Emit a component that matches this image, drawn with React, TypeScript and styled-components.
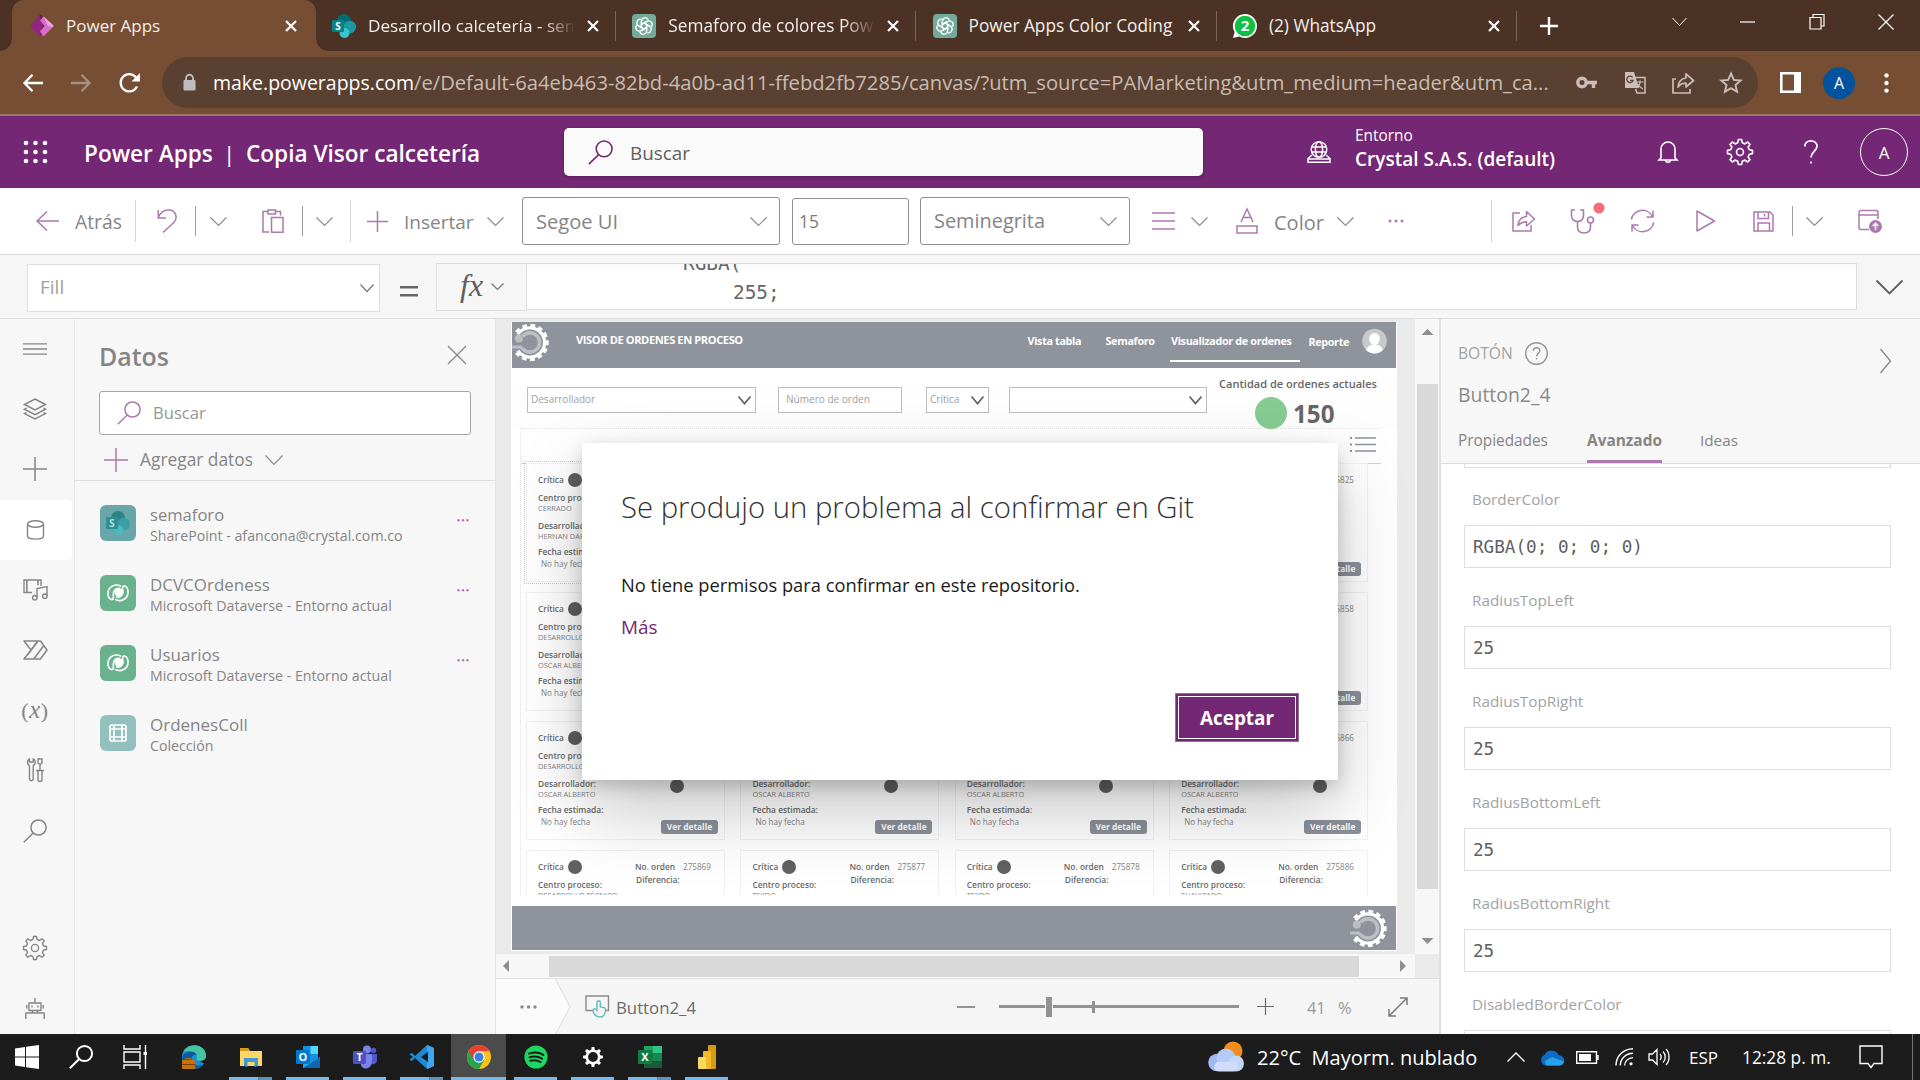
import React from "react";
import styled, { createGlobalStyle, css } from "styled-components";

const SANS = `"Open Sans", "Noto Sans", sans-serif`;
const MONO = `"DejaVu Sans Mono", "Liberation Mono", monospace`;
const plum = "#ac7aad";
const ink = "#858585";

const Global = createGlobalStyle`
  *, *::before, *::after { box-sizing: border-box; }
  html, body { margin: 0; padding: 0; overflow: hidden; background: #fff; }
  body { font-family: ${SANS}; font-size: 17px; color: ${ink}; }
`;

/* ---------- shared primitives ---------- */

const Screen = styled.div`
  width: 1920px;
  height: 1080px;
  overflow: hidden;
  display: flex;
  flex-direction: column;
  position: relative;
`;

const row = css`
  display: flex;
  align-items: center;
  & > * { flex-shrink: 0; }
`;

type TextProps = { $size?: number; $weight?: number; $color?: string; $ml?: number; $w?: number };
const Text = styled.span<TextProps>`
  display: block;
  white-space: pre;
  line-height: 1.35;
  font-size: ${(p) => p.$size ?? 17}px;
  font-weight: ${(p) => p.$weight ?? 400};
  color: ${(p) => p.$color ?? "inherit"};
  margin-left: ${(p) => p.$ml ?? 0}px;
  width: ${(p) => (p.$w ? `${p.$w}px` : "auto")};
`;

const Svg = styled.svg<{ $ml?: number }>`
  display: block;
  flex-shrink: 0;
  margin-left: ${(p) => p.$ml ?? 0}px;
  overflow: visible;
`;

type IconProps = {
  w: number; h: number; ml?: number; c?: string; sw?: number; vb?: string; children: React.ReactNode;
};
const Icon = ({ w, h, ml, c = "currentColor", sw = 1.4, vb, children }: IconProps) => (
  <Svg width={w} height={h} viewBox={vb ?? `0 0 ${w} ${h}`} $ml={ml} fill="none" stroke={c} strokeWidth={sw}>
    {children}
  </Svg>
);

const Chevron = ({ ml, w = 17, h = 9, c = "#8c8c8c", sw = 1.2 }: { ml?: number; w?: number; h?: number; c?: string; sw?: number }) => (
  <Icon w={w} h={h} ml={ml} c={c} sw={sw}><path d={`M.5 .5 L${w / 2} ${h - 0.5} L${w - 0.5} .5`} /></Icon>
);
const Magnifier = ({ s, ml, c, sw = 1.5 }: { s: number; ml?: number; c: string; sw?: number }) => (
  <Icon w={s} h={s} ml={ml} c={c} sw={sw} vb="0 0 24 24">
    <circle cx="15.5" cy="8.5" r="7.6" /><path d="M10.2 14 L.8 23.2" />
  </Icon>
);
const gearPath = (n: number, ro: number, ri: number, c: number) => {
  const pts: string[] = [];
  for (let i = 0; i < n; i++) {
    const a = (i / n) * Math.PI * 2 - Math.PI / 2;
    const s = (Math.PI * 2) / n;
    [[-0.3, ri], [-0.17, ro], [0.17, ro], [0.3, ri]].forEach(([k, r]) =>
      pts.push(`${(c + Math.cos(a + k * s) * r).toFixed(2)} ${(c + Math.sin(a + k * s) * r).toFixed(2)}`));
  }
  return `M${pts.join("L")}Z`;
};
const Gear = ({ s, ml, c, sw = 1.4, hole = 3.6 }: { s: number; ml?: number; c: string; sw?: number; hole?: number }) => (
  <Icon w={s} h={s} ml={ml} c={c} sw={sw} vb="0 0 24 24">
    <path d={gearPath(8, 11.6, 8.8, 12)} strokeLinejoin="round" /><circle cx="12" cy="12" r={hole} />
  </Icon>
);

/* ---------- browser chrome ---------- */

const TabStrip = styled.div`
  ${row}
  height: 51px;
  background: #4b3225;
  color: #fff;
  padding-left: 12px;
`;
const Tab = styled.div<{ $active?: boolean }>`
  ${row}
  position: relative;
  width: ${(p) => (p.$active ? 304 : 300.3)}px;
  height: 51px;
  padding-left: ${(p) => (p.$active ? 18 : 16)}px;
  background: ${(p) => (p.$active ? "#754e34" : "transparent")};
  border-radius: 12px 12px 0 0;
  ${(p) => p.$active && css`
    &::before, &::after {
      content: ""; position: absolute; bottom: 0; width: 12px; height: 12px;
    }
    &::before { left: -12px; background: radial-gradient(circle at 0 0, transparent 11.5px, #754e34 12px); }
    &::after { right: -12px; background: radial-gradient(circle at 100% 0, transparent 11.5px, #754e34 12px); }
  `}
`;
const TabTitle = styled(Text)<{ $fade?: boolean }>`
  margin-left: 12px;
  width: 205px;
  margin-right: 14px;
  overflow: hidden;
  padding-top: 1px;
  color: #f3eeea;
  ${(p) => p.$fade && css`mask-image: linear-gradient(90deg, #000 175px, transparent 208px);`}
`;
const TabRule = styled.i`
  width: 1px;
  height: 30px;
  margin-left: 16px;
  background: #7b6556;
`;
const Close = () => <Icon w={12} h={12} c="#fff" sw={2.2}><path d="M1 1L11 11M11 1L1 11" /></Icon>;

const AddressRow = styled.div`
  ${row}
  height: 65px;
  background: #754e34;
  border-bottom: 2px solid #957a60;
  padding: 0 0 0 23px;
`;
const Omnibox = styled.div`
  ${row}
  width: 1596px;
  height: 51px;
  margin-left: 22px;
  padding-left: 21px;
  border-radius: 26px;
  background: #594030;
  & > span { padding-top: 1px; }
`;
const ProfileDot = styled.div`
  width: 32px;
  height: 32px;
  margin-left: 22px;
  border-radius: 50%;
  background: #00539c;
  color: #fff;
  font-size: 16px;
  line-height: 32px;
  text-align: center;
`;

const GptLogo = () => (
  <Svg width="24" height="24" viewBox="0 0 24 24" fill="none" stroke="#fff" strokeWidth="1.3">
    <rect width="24" height="24" rx="4" fill="#74aa9c" stroke="none" />
    {[0, 60, 120, 180, 240, 300].map((a) => (
      <path key={a} transform={`rotate(${a} 12 12)`} d="M9.4 13.4V7.2A3.6 3.6 0 0 1 16.3 5.9M9.4 10.4L14.6 7.4" />
    ))}
  </Svg>
);
const PowerAppsLogo = () => (
  <Svg width="24" height="24" viewBox="0 0 24 24">
    <path d="M9.5 1 L16 12 L9.5 23 L1 13 Q.3 12 1 11Z" fill="#93277f" />
    <path d="M9.5 1 Q11 0 12 1.5 L16 12 L9.5 23 L12.5 12Z" fill="#6d1a62" />
    <path d="M13.5 2.5 L23 11 Q23.8 12 23 13 L13.5 22.5 L10 17.5 L14.5 12 L10 6.5Z" fill="#d76fc4" />
    <path d="M13.5 2.5 L23 11 Q23.8 12 23 13 L18 12Z" fill="#f0a3e0" />
  </Svg>
);
const SharePointLogo = ({ size = 24 }: { size?: number }) => (
  <Svg width={size} height={size} viewBox="0 0 24 24">
    <circle cx="12" cy="7" r="7" fill="#036c70" />
    <circle cx="17.7" cy="13" r="6.3" fill="#1a9ba1" />
    <circle cx="12.5" cy="19" r="5" fill="#37c6d0" />
    <rect x="0" y="6" width="12" height="12" rx="1" fill="#038387" />
    <text x="6" y="15.6" textAnchor="middle" fontSize="10" fontWeight="700" fill="#fff" fontFamily="Open Sans">S</text>
  </Svg>
);
const WhatsAppLogo = () => (
  <Svg width="24" height="24" viewBox="0 0 24 24">
    <path d="M12 0a12 12 0 1 1-5.8 22.5L0 24l1.6-6A12 12 0 0 1 12 0Z" fill="#fff" />
    <circle cx="12" cy="12" r="10.3" fill="#0cc143" />
    <text x="12" y="17.3" textAnchor="middle" fontSize="15" fontWeight="700" fill="#fff" fontFamily="Open Sans">2</text>
  </Svg>
);

const Browser = () => (
  <>
    <TabStrip>
      <Tab $active><PowerAppsLogo /><TabTitle $size={17}>Power Apps</TabTitle><Close /></Tab>
      <Tab><SharePointLogo /><TabTitle $size={17.2} $fade>Desarrollo calcetería - sem</TabTitle><Close /><TabRule /></Tab>
      <Tab><GptLogo /><TabTitle $size={17.3} $fade>Semaforo de colores Pow</TabTitle><Close /><TabRule /></Tab>
      <Tab><GptLogo /><TabTitle $size={17.25}>Power Apps Color Coding</TabTitle><Close /><TabRule /></Tab>
      <Tab><WhatsAppLogo /><TabTitle $size={17.3}>(2) WhatsApp</TabTitle><Close /><TabRule /></Tab>
      <Icon w={18} h={18} ml={23} c="#fff" sw={2.4}><path d="M9 0V18M0 9H18" /></Icon>
      <Icon w={15} h={45} ml={114} c="#fff" sw={1}><path d="M.5 15L7.5 22.5L14.5 15" /></Icon>
      <Icon w={15} h={45} ml={53} c="#fff" sw={1.2}><path d="M0 19H15" /></Icon>
      <Icon w={16} h={45} ml={54} c="#fff" sw={1.2}><path d="M1 14.5H12V26H1ZM4 14.5V11.5H15V23H12" /></Icon>
      <Icon w={16} h={45} ml={53} c="#fff" sw={1.2}><path d="M.5 11.5L15.5 26.5M15.5 11.5L.5 26.5" /></Icon>
    </TabStrip>
    <AddressRow>
      <Icon w={20} h={18} c="#fff" sw={2.3}><path d="M20 9H1.5M9.5 .8L1.5 9L9.5 17.2" /></Icon>
      <Icon w={20} h={18} ml={28} c="#a98f7e" sw={2.3}><path d="M0 9H18.5M10.5 .8L18.5 9L10.5 17.2" /></Icon>
      <Icon w={21} h={20} ml={28} c="#fff" sw={2.3}><path d="M18 13.5A8.6 8.6 0 1 1 16.8 4.2L19 6.5" /><path d="M21 0V8.6H12.4Z" fill="#fff" stroke="none" /></Icon>
      <Omnibox>
        <Icon w={13} h={17} c="#bdbdc1" sw={1.9}><rect x=".5" y="6" width="12" height="10.5" rx="1" fill="#bdbdc1" stroke="none" /><path d="M3 7V4.3A3.5 3.5 0 0 1 10 4.3V7" /></Icon>
        <Text $size={19.49} $color="#fff" $ml={17} $w={201}>make.powerapps.com</Text>
        <Text $size={20.19} $color="#c8bcb2" $w={1135}>/e/Default-6a4eb463-82bd-4a0b-ad11-ffebd2fb7285/canvas/?utm_source=PAMarketing&amp;utm_medium=header&amp;utm_ca...</Text>
        <Icon w={21} h={13} ml={27} c="#c9bfb8" sw={3.4}><circle cx="6" cy="6.5" r="4.2" /><path d="M10 6.5H21M17.5 7V12" /></Icon>
        <Icon w={22} h={22} ml={27} c="#c9bfb8" sw={1.5}>
          <path d="M1 0H10L15 16H1Z" fill="#c9bfb8" stroke="none" /><path d="M11 5.5H21V21H13L11.5 17" />
          <path d="M12.5 10H19.5M16 8.5V10C16 13 14 15.5 12.5 16M13.5 12C15 14.5 17 16 19 17" strokeWidth="1.2" />
          <path d="M8.6 5.4A3.2 3.2 0 1 0 9 8.4H6.2" stroke="#594030" strokeWidth="1.3" />
        </Icon>
        <Icon w={23} h={22} ml={26} c="#c9bfb8" sw={1.7}><path d="M4 7H1V21H18V17" /><path d="M6 15C6.5 9.5 9.5 6.5 14 6V1.8L21.5 8.5L14 15V11.2C10.5 11.2 8 12.4 6 15Z" strokeLinejoin="round" /></Icon>
        <Icon w={22} h={21} ml={25} c="#c9bfb8" sw={1.9}><path d="M11 1.5L13.8 7.9L20.7 8.5L15.5 13.1L17.1 19.8L11 16.2L4.9 19.8L6.5 13.1L1.3 8.5L8.2 7.9Z" /></Icon>
      </Omnibox>
      <Icon w={21} h={21} ml={22} c="#fff" sw={2.6}><path d="M1.3 1.3H19.7V19.7H1.3Z" /><path d="M14 1H20V20H14Z" fill="#fff" stroke="none" /></Icon>
      <ProfileDot>A</ProfileDot>
      <Icon w={5} h={20} ml={29} c="none"><g fill="#fff"><circle cx="2.5" cy="2.4" r="2.2" /><circle cx="2.5" cy="10" r="2.2" /><circle cx="2.5" cy="17.6" r="2.2" /></g></Icon>
    </AddressRow>
  </>
);

/* ---------- Power Apps header ---------- */

const SuiteHeader = styled.header`
  ${row}
  height: 72px;
  padding-left: 23px;
  background: #742774;
  color: #fff;
  & > span { padding-top: 4px; }
`;
const SuiteSearch = styled.div`
  ${row}
  width: 639px;
  height: 48px;
  margin-left: 84px;
  padding-left: 24px;
  border-radius: 5px;
  background: #fafafa;
  box-shadow: 0 1px 3px rgba(0, 0, 0, 0.3);
  & > span { padding-top: 3px; }
`;
const Environment = styled.div`
  width: 200px;
  margin: -6px 0 0 24px;
`;
const Persona = styled.div`
  width: 48px;
  height: 48px;
  margin-left: 41px;
  border: 1.3px solid #fff;
  border-radius: 50%;
  text-align: center;
  font-size: 17px;
  line-height: 48px;
`;

const Suite = () => (
  <SuiteHeader>
    <Icon w={25} h={24} c="none">
      {[3, 12, 21].map((y) => [3, 12.5, 22].map((x) => <circle key={`${x}-${y}`} cx={x} cy={y} r="2.3" fill="#fff" />))}
    </Icon>
    <Text $size={22.6} $weight={600} $ml={36} $w={129}>Power Apps</Text>
    <Text $size={22.6} $weight={400} $ml={10} $w={23}>|</Text>
    <Text $size={22.6} $weight={600} $w={234}>Copia Visor calcetería</Text>
    <SuiteSearch>
      <Magnifier s={25} c="#742774" />
      <Text $size={18.87} $color="#605e5c" $ml={17}>Buscar</Text>
    </SuiteSearch>
    <Icon w={24} h={22} ml={104} c="#fff" sw={1.5}>
      <circle cx="12" cy="8.5" r="7.8" /><ellipse cx="12" cy="8.5" rx="3.6" ry="7.8" /><path d="M4.5 6H19.5M4.5 11H19.5M5 14L1 17.5V21.2H23V17.5L19 14M1 18H23" />
    </Icon>
    <Environment>
      <Text $size={15.4}>Entorno</Text>
      <Text $size={19} $weight={600}>Crystal S.A.S. (default)</Text>
    </Environment>
    <Icon w={20} h={24} ml={103} c="#fff" sw={1.6}><path d="M3 18V9A7 7 0 0 1 17 9V18L19 20H1L3 18ZM7.5 20.5A2.6 2.6 0 0 0 12.5 20.5" /></Icon>
    <Gear s={26} ml={49} c="#fff" sw={1.5} hole={3.2} />
    <Icon w={16} h={24} ml={50} c="#fff" sw={1.7}><path d="M1.8 6.5C1.8 -1 14 -1 14 6.2C14 11 8 12 8 17.5M8 21.4V23.6" /></Icon>
    <Persona>A</Persona>
  </SuiteHeader>
);

/* ---------- command bar ---------- */

const CommandBar = styled.div`
  ${row}
  height: 67px;
  padding: 0 0 0 36px;
  background: #fff;
  border-bottom: 1px solid #dedede;
  & > span { padding-top: 3px; }
`;
const Rule = styled.i<{ $ml: number; $tall?: boolean }>`
  width: 1px;
  height: ${(p) => (p.$tall ? 42 : 30)}px;
  margin-left: ${(p) => p.$ml}px;
  background: ${(p) => (p.$tall ? "#d6d6d6" : "#9c9c9c")};
`;
const Combo = styled.div<{ $w: number; $ml: number }>`
  ${row}
  justify-content: space-between;
  width: ${(p) => p.$w}px;
  height: 48px;
  margin-left: ${(p) => p.$ml}px;
  padding: 0 12px 0 13px;
  border: 1px solid #8f8f8f;
  border-radius: 3px;
  & > span { padding-top: 1px; }
`;
const SizeBox = styled(Combo)`
  height: 47px;
  padding-left: 6px;
`;

const Commands = () => (
  <CommandBar>
    <Icon w={23} h={20} c={plum} sw={1.5}><path d="M23 10H1M11 .5L1 10L11 19.5" /></Icon>
    <Text $size={19.34} $ml={16} $w={48}>Atrás</Text>
    <Rule $ml={12} $tall />
    <Icon w={20} h={24} ml={21} c={plum} sw={1.5}><path d="M1.2 1V9H9M1.2 8.8C3 4 7 1 11.5 1C19.5 1 21 9.5 16.5 13.8L6 23.5" /></Icon>
    <Rule $ml={18} />
    <Chevron ml={14} />
    <Icon w={22} h={24} ml={35} c={plum} sw={1.5}><path d="M6 2.5H1V23H7M14 2.5H18.5V6.5M6 1H13.5V5H6ZM9.5 8.5H21V23.2H9.5Z" /></Icon>
    <Rule $ml={18} />
    <Chevron ml={13} />
    <Rule $ml={17} $tall />
    <Icon w={21} h={21} ml={16} c={plum} sw={1.5}><path d="M10.5 0V21M0 10.5H21" /></Icon>
    <Text $size={19} $ml={16} $w={70}>Insertar</Text>
    <Chevron ml={13} />
    <Combo $w={258} $ml={18}><Text $size={20.1}>Segoe UI</Text><Chevron /></Combo>
    <SizeBox $w={117} $ml={12}><Text $size={17.3} $color="#7c7c7c">15</Text></SizeBox>
    <Combo $w={210} $ml={11}><Text $size={19.9}>Seminegrita</Text><Chevron /></Combo>
    <Icon w={23} h={18} ml={22} c={plum} sw={1.5}><path d="M0 1H23M0 9H23M0 17H23" /></Icon>
    <Chevron ml={16} />
    <Icon w={22} h={26} ml={28} c={plum} sw={1.5}><path d="M5 14L11 1L17 14M7.2 9.5H14.8M1 18H21V25H1Z" /></Icon>
    <Text $size={20.05} $ml={16} $w={51}>Color</Text>
    <Chevron ml={12} />
    <Icon w={16} h={4} ml={34} c="none"><g fill={plum}><circle cx="2" cy="2" r="1.5" /><circle cx="8" cy="2" r="1.5" /><circle cx="14" cy="2" r="1.5" /></g></Icon>
    <Rule $ml={87} $tall />
    <Icon w={24} h={22} ml={20} c={plum} sw={1.5}><path d="M8 3H1V21H19V15" /><path d="M6 15.5C6.5 9.5 9.5 7 14.5 6.5V1.5L22.5 9L14.5 16V11.8C11 11.8 8.5 13 6 15.5Z" strokeLinejoin="round" /></Icon>
    <Icon w={34} h={26} ml={34} c={plum} sw={1.6}>
      <path d="M5 2H1.5V8C1.5 11 4 13.5 7.5 13.5S13.5 11 13.5 8V2H10M7.5 13.5V19C7.5 23 10 25 14 25S20.5 23 20.5 19V15" /><circle cx="20.5" cy="12" r="3" />
      <circle cx="29" cy="0" r="5.6" fill="#f1707b" stroke="none" />
    </Icon>
    <Icon w={25} h={24} ml={26} c={plum} sw={1.5}><path d="M1.3 10.5A11.3 11.3 0 0 1 22.5 7.5M23 1.5V8H16.5M23.7 13.5A11.3 11.3 0 0 1 2.5 16.5M2 22.5V16H8.5" /></Icon>
    <Icon w={19} h={22} ml={41} c={plum} sw={1.5}><path d="M1 1L18.5 11L1 21Z" strokeLinejoin="round" /></Icon>
    <Icon w={21} h={21} ml={38} c={plum} sw={1.5}><path d="M1 1H17L20 4V20H1ZM5 1V7.5H15.5V1M5 20V12H16.5V20M11.5 3V5.5" /></Icon>
    <Rule $ml={18} />
    <Chevron ml={13} />
    <Icon w={25} h={24} ml={35} c={plum} sw={1.5}>
      <path d="M11 20.5H3A2 2 0 0 1 1 18.5V3.5A2 2 0 0 1 3 1.5H18A2 2 0 0 1 20 3.5V10M1 6H20" />
      <circle cx="17.5" cy="17.5" r="6.5" fill={plum} stroke="none" /><path d="M17.5 21V14.5M14.7 17L17.5 14.2L20.3 17" stroke="#fff" />
    </Icon>
  </CommandBar>
);

/* ---------- formula bar ---------- */

const FormulaBar = styled.div`
  ${row}
  height: 64px;
  padding: 0 0 0 27px;
  background: #f6f6f6;
  border-bottom: 1px solid #dedede;
`;
const PropertyPicker = styled.div`
  ${row}
  justify-content: space-between;
  width: 353px;
  height: 48px;
  margin-top: 2px;
  padding: 0 5px 0 12px;
  background: #fff;
  border: 1px solid #dedede;
`;
const FxButton = styled.div`
  ${row}
  width: 91px;
  height: 48px;
  margin-left: 18px;
  padding-left: 23px;
  border: 1px solid #dedede;
`;
const FxGlyph = styled.span`
  width: 28px;
  margin-top: -4px;
  font: italic 32px/40px "Liberation Serif", serif;
  color: #5e5e5e;
`;
const FormulaInput = styled.pre`
  width: 1331px;
  height: 47px;
  margin: -1px 0 0 -1px;
  padding-left: 156px;
  overflow: hidden;
  background: linear-gradient(#fafafa, #fff 8px);
  border: 1px solid #dedede;
  font: 19.4px/29px ${MONO};
  color: #666;
  & > span { display: block; margin-top: -15px; }
  & > span + span { margin: 0 0 0 50px; }
`;

const Formula = () => (
  <FormulaBar>
    <PropertyPicker><Text $size={19} $color="#a0a0a0">Fill</Text><Chevron w={14} h={8} c="#777" /></PropertyPicker>
    <Icon w={18} h={10} ml={20} c="#666" sw={2.4}><path d="M0 5.2H18M0 13.2H18" /></Icon>
    <FxButton><FxGlyph>fx</FxGlyph><Chevron ml={3} w={13} h={7} c="#777" /></FxButton>
    <FormulaInput><span>RGBA(</span><span>255;</span></FormulaInput>
    <Chevron ml={19} w={27} h={14} c="#5e5e5e" sw={1.8} />
  </FormulaBar>
);

/* ---------- left rail + data panel ---------- */

const Workspace = styled.div`
  display: flex;
  height: 715px;
`;
const Rail = styled.nav`
  width: 75px;
  height: 715px;
  padding-top: 0;
  background: #f7f7f7;
  border-right: 1px solid #e6e6e6;
  display: flex;
  flex-direction: column;
`;
const RailItem = styled.div<{ $selected?: boolean; $push?: number }>`
  display: flex;
  flex-shrink: 0;
  align-items: center;
  justify-content: center;
  width: 72px;
  height: 60.2px;
  margin-top: ${(p) => p.$push ?? 0}px;
  padding-right: 2px;
  border-radius: 0 4px 4px 0;
  background: ${(p) => (p.$selected ? "#fff" : "transparent")};
`;
const VarGlyph = styled.span`
  font: 22px/24px "Liberation Serif", serif;
  letter-spacing: 0.5px;
  & > i { font-size: 25px; }
`;

const RailIcons = () => (
  <Rail>
    <RailItem><Icon w={24} h={12} c={ink} sw={1.3}><path d="M0 .8H24M0 6H24M0 11.2H24" /></Icon></RailItem>
    <RailItem>
      <Icon w={24} h={22} c={ink} sw={1.5}><path d="M12 1L22.5 6.5L12 12L1.5 6.5ZM3.5 10.2L1.5 11.2L12 16.7L22.5 11.2L20.5 10.2M3.5 14.6L1.5 15.6L12 21L22.5 15.6L20.5 14.6" /></Icon>
    </RailItem>
    <RailItem><Icon w={24} h={24} c={ink} sw={1.5}><path d="M12 0V24M0 12H24" /></Icon></RailItem>
    <RailItem $selected>
      <Icon w={17} h={20} c={ink} sw={1.4}><ellipse cx="8.5" cy="4" rx="8" ry="3.2" /><path d="M.5 4V16C.5 20.2 16.5 20.2 16.5 16V4" /></Icon>
    </RailItem>
    <RailItem>
      <Icon w={25} h={22} c={ink} sw={1.4}>
        <path d="M9 13.5H1V1H18V7M3.8 1V13M15 1V6" /><path d="M3.8 2V13M15 2V6" strokeDasharray="1.5 1.5" />
        <path d="M14 18.5V9.5L24 7.5V17" /><circle cx="11.8" cy="18.7" r="2.2" /><circle cx="21.8" cy="17.2" r="2.2" />
      </Icon>
    </RailItem>
    <RailItem>
      <Icon w={25} h={20} c={ink} sw={1.5}><path d="M1 1H17.5L24 10L17.5 19H1L8 10ZM8 10L14.5 1.2M11 18.8L20.8 5.5M4.5 15L14.8 1.5" strokeLinejoin="round" /></Icon>
    </RailItem>
    <RailItem><VarGlyph>(<i>x</i>)</VarGlyph></RailItem>
    <RailItem>
      <Icon w={17} h={24} c={ink} sw={1.4}>
        <path d="M2.5 7.5V21.5A2 2 0 0 0 6.2 21.5V7.5M2.5 7.5A3.6 3.6 0 0 1 2.5 1V4H6.2V1A3.6 3.6 0 0 1 6.2 7.5" />
        <path d="M11 1H15V5L13 6.5L11 5ZM13 6V12M9 12.5H17M11 13V21.5A2 2 0 0 0 15 21.5V13" />
      </Icon>
    </RailItem>
    <RailItem><Magnifier s={24} c={ink} /></RailItem>
    <RailItem $push={57}><Gear s={24} c={ink} sw={1.4} /></RailItem>
    <RailItem>
      <Icon w={20} h={22} c={ink} sw={1.4}>
        <path d="M4 6H16V13.5H4ZM10 6V1M1.8 8V11.5M18.2 8V11.5M7 8.5V10.5M13 8.5V10.5M7.5 13.5V16M12.5 13.5V16M.8 22V16H19.2V22" strokeLinejoin="round" />
      </Icon>
    </RailItem>
  </Rail>
);

const DataPanel = styled.section`
  width: 421px;
  background: #f7f7f7;
  border-right: 1px solid #e4e4e4;
`;
const PanelHead = styled.div`
  ${row}
  justify-content: space-between;
  height: 72px;
  padding: 0 29px 0 24px;
  & > span { padding-top: 3px; }
`;
const PanelSearch = styled.div`
  ${row}
  width: 372px;
  height: 44px;
  margin-left: 24px;
  padding-left: 17px;
  background: #fff;
  border: 1px solid #a6a6a6;
  border-radius: 3px;
  & > span { padding-top: 1px; }
`;
const AddData = styled.div`
  ${row}
  height: 46px;
  padding: 4px 0 0 29px;
  margin-bottom: 7px;
  border-bottom: 1px solid #dedede;
`;
const SourceRow = styled.div`
  ${row}
  height: 70px;
  padding-left: 25px;
`;
const SourceTile = styled.div<{ $color: string }>`
  display: flex;
  align-items: center;
  justify-content: center;
  width: 36px;
  height: 36px;
  border-radius: 6px;
  background: ${(p) => p.$color};
`;
const SourceText = styled.div`
  width: 307px;
  margin: 3px 0 0 14px;
  & > span { line-height: 21px; }
`;
const Washed = styled.div`
  opacity: 0.6;
`;
const Swirl = () => (
  <Icon w={22} h={18} c="#fff" sw={1.6}>
    <ellipse cx="12" cy="8.5" rx="4.6" ry="4.2" fill="#fff" stroke="none" />
    <path d="M14 2.2C8 -.8 1.2 2.8 1 9C.9 12 2.2 14.8 4.4 15.6C6.6 16.2 6.6 13 6.2 10.6C5.8 6.2 9.5 3.6 13 4.6" />
    <path d="M8 15.4C14 18.6 20.8 14.8 21 8.6C21.1 5.6 19.8 2.6 17.6 2C15.4 1.4 15.4 4.4 15.8 7C16.2 11.4 12.5 14 9 13" />
  </Icon>
);
const More = () => (
  <Icon w={12} h={4} c="none"><g fill={plum}><circle cx="1.5" cy="-.8" r="1.2" /><circle cx="6" cy="-.8" r="1.2" /><circle cx="10.5" cy="-.8" r="1.2" /></g></Icon>
);
const sources = [
  { name: "semaforo", size: 16.6, sub: "SharePoint - afancona@crystal.com.co", color: "#68a6a9", kind: "sp" },
  { name: "DCVCOrdeness", size: 16.97, sub: "Microsoft Dataverse - Entorno actual", color: "#6ab28d", kind: "dv" },
  { name: "Usuarios", size: 17, sub: "Microsoft Dataverse - Entorno actual", color: "#6ab28d", kind: "dv" },
  { name: "OrdenesColl", size: 17, sub: "Colección", color: "#92c1bd", kind: "grid" },
];

const Data = () => (
  <DataPanel>
    <PanelHead>
      <Text $size={24.95} $weight={600}>Datos</Text>
      <Icon w={18} h={18} c={ink} sw={1.2}><path d="M0 0L18 18M18 0L0 18" /></Icon>
    </PanelHead>
    <PanelSearch><Magnifier s={24} c={plum} sw={1.5} /><Text $size={16.6} $ml={12} $color="#969696">Buscar</Text></PanelSearch>
    <AddData>
      <Icon w={24} h={24} c={plum} sw={1.5}><path d="M12 0V24M0 12H24" /></Icon>
      <Text $size={17.35} $ml={12} $w={113}>Agregar datos</Text>
      <Chevron ml={12} w={18} h={10} />
    </AddData>
    {sources.map((s) => (
      <SourceRow key={s.name}>
        <SourceTile $color={s.color}>
          {s.kind === "sp" && <Washed><SharePointLogo size={24} /></Washed>}
          {s.kind === "dv" && <Swirl />}
          {s.kind === "grid" && <Icon w={18} h={18} c="#fff" sw={1.7}><rect x="1" y="1" width="16" height="16" rx="2" /><path d="M5 1V17M13 1V17M1 5H17M1 13H17" /></Icon>}
        </SourceTile>
        <SourceText>
          <Text $size={s.size}>{s.name}</Text>
          <Text $size={14.2}>{s.sub}</Text>
        </SourceText>
        {s.kind !== "grid" && <More />}
      </SourceRow>
    ))}
  </DataPanel>
);

/* ---------- canvas ---------- */

const CanvasColumn = styled.main`
  width: 945px;
  height: 715px;
  background: #eaeaea;
  border-right: 2px solid #e0e0e0;
`;
const CanvasRow = styled.div`
  display: flex;
  height: 635px;
`;
const Stage = styled.div`
  width: 919px;
  padding: 3px 0 0 15px;
`;
const VScroll = styled.div`
  display: flex;
  flex-direction: column;
  align-items: center;
  justify-content: space-between;
  width: 24px;
  padding: 10px 0 10px 1px;
  background: #f7f7f7;
`;
const VThumb = styled.div`
  width: 21px;
  height: 505px;
  background: #d9d9d9;
`;
const HScrollRow = styled.div`
  ${row}
  width: 919px;
  height: 24px;
  padding-left: 7px;
  background: #f7f7f7;
`;
const HThumb = styled.div`
  width: 810px;
  height: 21px;
  margin-left: 40px;
  background: #d9d9d9;
`;
const Arrow = styled.i<{ $dir: "up" | "down" | "left" | "right"; $ml?: number }>`
  width: ${(p) => (p.$dir === "up" || p.$dir === "down" ? 12 : 6)}px;
  height: ${(p) => (p.$dir === "up" || p.$dir === "down" ? 6 : 12)}px;
  margin-left: ${(p) => p.$ml ?? 0}px;
  background: #8e8e8e;
  clip-path: ${(p) =>
    ({
      up: "polygon(50% 0, 100% 100%, 0 100%)",
      down: "polygon(0 0, 100% 0, 50% 100%)",
      left: "polygon(100% 0, 100% 100%, 0 50%)",
      right: "polygon(0 0, 100% 50%, 0 100%)",
    })[p.$dir]};
`;
const Page = styled.div`
  width: 886px;
  height: 629px;
  padding-left: 1px;
  background: #fff;
`;
const PageHeader = styled.div`
  display: flex;
  width: 884px;
  height: 46px;
  background: #8f939c;
  color: #fff;
  & > * { flex-shrink: 0; }
`;
const PageTitle = styled(Text)`
  margin: 10px 0 0 27px;
  line-height: 16px;
  letter-spacing: -0.4px;
`;
const NavLink = styled(Text)<{ $active?: boolean; $drop?: number }>`
  margin-top: ${(p) => p.$drop ?? 11}px;
  line-height: 16px;
  letter-spacing: -0.35px;
  ${(p) => p.$active && css`height: 29px; border-bottom: 2px solid #fff; padding-left: 1px;`}
`;
const Filters = styled.div`
  display: flex;
  height: 60px;
  background: linear-gradient(#fff, #fdfdfd);
  & > * { flex-shrink: 0; }
`;
const FilterBox = styled.div<{ $w: number; $ml: number; $pad?: number }>`
  ${row}
  justify-content: space-between;
  width: ${(p) => p.$w}px;
  height: 26px;
  margin: 19px 0 0 ${(p) => p.$ml}px;
  padding: 0 4px 0 ${(p) => p.$pad ?? 3}px;
  border: 1px solid #bdbdbd;
  background: #fff;
  color: #a0a0a0;
`;
const CountBlock = styled.div`
  width: 160px;
  margin: 8px 0 0 12px;
  color: #666;
  & > span { line-height: 16px; }
`;
const CountRow = styled.div`
  ${row}
  height: 34px;
  margin-top: 4px;
  padding-left: 36px;
  & > span { padding-top: 2px; }
`;
const GreenDot = styled.i`
  width: 32px;
  height: 32px;
  border-radius: 50%;
  background: #86cc92;
`;
const Gallery = styled.div`
  width: 861px;
  height: 467px;
  margin-left: 8px;
  overflow: hidden;
  border-left: 1px dotted #e2e2e2;
`;
const GalleryHead = styled.div`
  display: flex;
  justify-content: flex-end;
  height: 36px;
  padding: 8px 5px 0 0;
  border-top: 1px dotted #e2e2e2;
  border-bottom: 1px solid #cfcfcf;
`;
const CardGrid = styled.div`
  display: grid;
  grid-template-columns: repeat(4, 199px);
  grid-auto-rows: 118px;
  gap: 11px 15.4px;
  padding-left: 5px;
`;
const Card = styled.article<{ $picked?: boolean }>`
  display: flex;
  margin-top: -1px;
  height: 119px;
  border: 1px solid #f1f1f1;
  color: #6a6a6a;
  ${(p) => p.$picked && css`outline: 1px dotted #b0cfeb; outline-offset: 1px;`}
`;
const CardLeft = styled.div`
  width: 108px;
  padding: 7px 0 0 11px;
`;
const CardRight = styled.div`
  width: 89px;
  margin-left: auto;
  padding-top: 7px;
`;
const CardLine = styled.div<{ $gap?: number; $in?: number }>`
  ${row}
  height: 10px;
  margin-top: ${(p) => p.$gap ?? 0}px;
  padding-left: ${(p) => p.$in ?? 0}px;
`;
const CardTop = styled(CardLine)`
  height: 17px;
`;
const Key = styled(Text)`
  font-size: 8.37px;
  font-weight: 600;
  line-height: 10px;
`;
const Val = styled(Text)<{ $big?: boolean }>`
  font-size: ${(p) => (p.$big ? 8.1 : 7.4)}px;
  line-height: 10px;
  color: #858585;
`;
const Dot = styled.i<{ $mt?: number; $ml?: number }>`
  display: block;
  width: 14px;
  height: 14px;
  margin: ${(p) => p.$mt ?? 0}px 0 0 ${(p) => p.$ml ?? 0}px;
  border-radius: 50%;
  background: #616161;
`;
const DetailButton = styled.div`
  width: 57px;
  height: 14px;
  margin: 27px 0 0 26px;
  border-radius: 3px;
  background: #8a9099;
  color: #fff;
  font-size: 8.4px;
  font-weight: 700;
  line-height: 14px;
  text-align: center;
`;
const PageFooter = styled.div`
  display: flex;
  justify-content: flex-end;
  align-items: center;
  width: 884px;
  height: 44px;
  margin-top: 11px;
  padding-right: 9px;
  background: #8f939c;
`;

const arc = (cx: number, cy: number, r: number, deg: number) => {
  const a = (deg * Math.PI) / 180;
  const x = cx + Math.cos(a) * r;
  const y = Math.sin(a) * r;
  return `M${x} ${cy - y}A${r} ${r} 0 1 1 ${x} ${cy + y}`;
};
const GearMark = () => (
  <Svg width="37" height="40" viewBox="0 0 37 40" fill="none">
    <path d={arc(18, 20.5, 14.6, 146)} stroke="#fff" strokeWidth="3.2" />
    <path d={arc(18, 20.5, 17, 143)} stroke="#fff" strokeWidth="3.4" strokeDasharray="4.7 3.3" />
    <path d={arc(18, 20.5, 9.6, 140)} stroke="#bcbfc6" strokeWidth="3.6" />
    <path d="M0 25H8.5L11.2 27.5" stroke="#bcbfc6" strokeWidth="3" />
    <circle cx="6.8" cy="16.5" r="4" fill="#bdbdbd" />
  </Svg>
);

type Order = { no?: string; proc?: string; dev?: string };
const OSCAR = "OSCAR ALBERTO";
const orders: Order[] = [
  { proc: "CERRADO", dev: "HERNAN DARIO" }, {}, {}, { no: "275825" },
  { proc: "DESARROLLO", dev: OSCAR }, {}, {}, { no: "275858" },
  { proc: "DESARROLLO", dev: OSCAR, no: "" }, { proc: "", dev: OSCAR, no: "" }, { proc: "", dev: OSCAR, no: "" }, { proc: "", dev: OSCAR, no: "275866" },
  { no: "275869", proc: "DESARROLLO TÉCNICO", dev: OSCAR }, { no: "275877", proc: "TEJIDO", dev: OSCAR },
  { no: "275878", proc: "TEJIDO", dev: OSCAR }, { no: "275886", proc: "SUAVIZADO", dev: OSCAR },
];

const OrderCard = ({ order: { no, proc, dev }, picked }: { order: Order; picked: boolean }) => (
  <Card $picked={picked}>
    {dev !== undefined && (
      <CardLeft>
        <CardTop>{proc && <><Key $w={30}>Crítica</Key><Dot /></>}</CardTop>
        <CardLine $gap={5}>{proc && <Key>Centro proceso:</Key>}</CardLine>
        <CardLine><Val>{proc}</Val></CardLine>
        <CardLine $gap={8}><Key>Desarrollador:</Key></CardLine>
        <CardLine><Val>{dev}</Val></CardLine>
        <CardLine $gap={6}><Key>Fecha estimada:</Key></CardLine>
        <CardLine $gap={2} $in={3}><Val $big>No hay fecha</Val></CardLine>
      </CardLeft>
    )}
    {no !== undefined && (
      <CardRight>
        <CardTop>{no && <><Key $w={48}>No. orden</Key><Val $big>{no}</Val></>}</CardTop>
        <CardLine $in={1}>{no && <Key>Diferencia:</Key>}</CardLine>
        <Dot $mt={23} $ml={35} />
        <DetailButton>Ver detalle</DetailButton>
      </CardRight>
    )}
  </Card>
);
const FilterChevron = () => <Chevron w={13} h={8} c="#666" sw={1.8} />;

const OrderPage = () => (
  <Page>
    <PageHeader>
      <GearMark />
      <PageTitle $size={11.1} $weight={700} $w={167}>VISOR DE ORDENES EN PROCESO</PageTitle>
      <NavLink $size={10.8} $weight={700} $ml={284.5} $w={54}>Vista tabla</NavLink>
      <NavLink $size={10.8} $weight={700} $ml={24} $w={49}>Semaforo</NavLink>
      <NavLink $size={10.8} $weight={700} $ml={15.5} $w={130} $active>Visualizador de ordenes</NavLink>
      <NavLink $size={10.8} $weight={700} $ml={8.5} $w={41} $drop={12}>Reporte</NavLink>
      <Icon w={25} h={38} ml={12} c="none">
        <circle cx="12.5" cy="19" r="12.3" fill="#c9c9c9" /><ellipse cx="12.5" cy="17" rx="5.4" ry="6" fill="#fff" />
        <path d="M4 28C5.5 24 8.5 22.5 12.5 22.5S19.5 24 21 28A12.3 12.3 0 0 1 4 28Z" fill="#fff" />
      </Icon>
    </PageHeader>
    <Filters>
      <FilterBox $w={229} $ml={15}><Text $size={10}>Desarrollador</Text><FilterChevron /></FilterBox>
      <FilterBox $w={124} $ml={22} $pad={7}><Text $size={10.06}>Número de orden</Text></FilterBox>
      <FilterBox $w={63} $ml={24}><Text $size={10}>Crítica</Text><FilterChevron /></FilterBox>
      <FilterBox $w={198} $ml={20}><span /><FilterChevron /></FilterBox>
      <CountBlock>
        <Text $size={11.05} $weight={600}>Cantidad de ordenes actuales</Text>
        <CountRow><GreenDot /><Text $size={24.2} $weight={700} $ml={6}>150</Text></CountRow>
      </CountBlock>
    </Filters>
    <Gallery>
      <GalleryHead>
        <Icon w={26} h={16} c="#8f939c" sw={1.4}><path d="M5 1H26M5 7.5H26M5 14H26" /><path d="M0 1H2M0 7.5H2M0 14H2" strokeWidth="1.8" /></Icon>
      </GalleryHead>
      <CardGrid>
        {orders.map((o, i) => <OrderCard key={i} order={o} picked={i === 0} />)}
      </CardGrid>
    </Gallery>
    <PageFooter><GearMark /></PageFooter>
  </Page>
);

const StatusBar = styled.div`
  ${row}
  height: 56px;
  background: #f5f5f5;
  border-top: 1px solid #dedede;
  & > span { padding-top: 4px; }
`;
const Crumb = styled.div`
  width: 75px;
  height: 55px;
`;
const SliderTrack = styled.div`
  ${row}
  width: 240px;
  height: 24px;
  margin-left: 24px;
  background: linear-gradient(#929292, #929292) center / 100% 3px no-repeat;
`;
const SliderThumb = styled.i`
  width: 8px;
  height: 22px;
  margin-left: 46px;
  background: #929292;
  border: 1px solid #f5f5f5;
`;
const SliderTick = styled.i`
  width: 3px;
  height: 12px;
  margin-left: 39px;
  background: #929292;
`;

const Canvas = () => (
  <CanvasColumn>
    <CanvasRow>
      <Stage><OrderPage /></Stage>
      <VScroll><Arrow $dir="up" /><VThumb /><Arrow $dir="down" /></VScroll>
    </CanvasRow>
    <HScrollRow><Arrow $dir="left" /><HThumb /><Arrow $dir="right" $ml={41} /></HScrollRow>
    <StatusBar>
      <Crumb>
        <Icon w={75} h={55} c="#dedede" sw={1}>
          <path d="M0 0H59.5L74 28L59.5 55H0Z" fill="#fbfbfb" stroke="none" /><path d="M59.5 0L74 28L59.5 55" />
          <g fill="#8a8a8a" stroke="none"><circle cx="26" cy="28" r="1.7" /><circle cx="32.5" cy="28" r="1.7" /><circle cx="39" cy="28" r="1.7" /></g>
        </Icon>
      </Crumb>
      <Icon w={24} h={23} ml={14} c="#8a8a8a" sw={1.4}>
        <path d="M9 15.5H1V1H23.5V15.5H20" />
        <path d="M12 15.5V7A1.7 1.7 0 0 1 15.3 7V12L19 12.6C20.4 13 20.8 13.8 20.6 15C20.3 18.5 19.5 22 15 22C11 22 9 19.5 8 16C7.6 13.6 9.6 12.8 12 15.5Z" stroke="#5fb9bd" fill="#f5f5f5" />
      </Icon>
      <Text $size={16.8} $ml={7} $w={90} $color="#6b6b6b">Button2_4</Text>
      <Icon w={18} h={2} ml={251} c="#6b6b6b" sw={1.4}><path d="M0 1H18" /></Icon>
      <SliderTrack><SliderThumb /><SliderTick /></SliderTrack>
      <Icon w={17} h={17} ml={18} c="#6b6b6b" sw={1.2}><path d="M8.5 0V17M0 8.5H17" /></Icon>
      <Text $size={16.4} $ml={33} $w={31} $color="#9a9a9a">41</Text>
      <Text $size={16.4} $w={31} $color="#9a9a9a">%</Text>
      <Icon w={20} h={20} ml={19} c="#7a7a7a" sw={1.5}><path d="M1 19L19 1M12 1H19V8M1 12V19H8" /></Icon>
    </StatusBar>
  </CanvasColumn>
);

/* ---------- property panel ---------- */

const PropPanel = styled.aside`
  width: 479px;
  height: 715px;
  overflow: hidden;
  background: #fff;
`;
const PropHead = styled.div`
  height: 145px;
  padding: 21px 0 0 17px;
  background: #f7f7f7;
  border-bottom: 1px solid #dedede;
`;
const KindRow = styled.div`
  ${row}
  height: 26px;
  margin-bottom: 16px;
  & > span { padding-top: 2px; }
`;
const TabsRow = styled.div`
  display: flex;
  height: 40px;
  margin-top: 15px;
`;
const PropTab = styled(Text)<{ $on?: boolean }>`
  height: 40px;
  line-height: 35px;
  border-bottom: 3px solid ${(p) => (p.$on ? plum : "transparent")};
`;
const PropTail = styled.div`
  width: 427px;
  height: 4px;
  margin: 0 0 20px 23px;
  border: 1px solid #dedede;
  border-top: 0;
`;
const PropField = styled.div`
  height: 101px;
  padding-left: 23px;
`;
const PropName = styled(Text)`
  height: 37px;
  padding-left: 8px;
  line-height: 22px;
  font-size: 15.3px;
  color: #a3a3a3;
`;
const PropValue = styled.div`
  width: 427px;
  height: 43px;
  padding: 0 8px;
  border: 1px solid #dedede;
  font: 17.65px/42px ${MONO};
  white-space: pre;
  color: #5f5f5f;
`;
const fields: [string, string][] = [
  ["BorderColor", "RGBA(0; 0; 0; 0)"], ["RadiusTopLeft", "25"], ["RadiusTopRight", "25"],
  ["RadiusBottomLeft", "25"], ["RadiusBottomRight", "25"], ["DisabledBorderColor", ""],
];

const Properties = () => (
  <PropPanel>
    <PropHead>
      <KindRow>
        <Text $size={15.6} $w={67} $color="#a3a3a3">BOTÓN</Text>
        <Icon w={23} h={23} c="#999" sw={1.4}><circle cx="11.5" cy="11.5" r="10.8" /><path d="M8.4 8.8C8.4 4.8 14.8 4.8 14.8 8.8C14.8 11.4 11.6 11.4 11.6 14.4M11.6 16V17.6" /></Icon>
        <Icon w={11} h={23} ml={332} c={ink} sw={1.3}><path d="M.5 7L10.5 19L.5 31" /></Icon>
      </KindRow>
      <Text $size={19.4} $color="#8a8a8a">Button2_4</Text>
      <TabsRow>
        <PropTab $size={15.37} $w={129}>Propiedades</PropTab>
        <PropTab $size={15.42} $weight={700} $w={75} $on>Avanzado</PropTab>
        <PropTab $size={15.29} $ml={38}>Ideas</PropTab>
      </TabsRow>
    </PropHead>
    <PropTail />
    {fields.map(([n, v]) => (
      <PropField key={n}><PropName>{n}</PropName><PropValue>{v}</PropValue></PropField>
    ))}
  </PropPanel>
);

/* ---------- dialog ---------- */

const Dialog = styled.div`
  position: absolute;
  left: 582px;
  top: 443px;
  width: 756px;
  height: 337px;
  padding: 44px 39px 0 39px;
  display: flex;
  flex-direction: column;
  align-items: flex-start;
  background: #fff;
  border-radius: 2px;
  box-shadow: 0 32px 72px rgba(0, 0, 0, 0.22), 0 6px 18px rgba(0, 0, 0, 0.18);
`;
const DialogTitle = styled(Text)`
  line-height: 40px;
  color: #323130;
`;
const DialogBody = styled(Text)`
  margin-top: 46px;
  line-height: 24px;
  color: #1b1a19;
`;
const DialogLink = styled(Text)`
  margin-top: 18px;
  line-height: 24px;
  color: #742774;
`;
const AcceptButton = styled.button`
  align-self: flex-end;
  width: 124px;
  height: 49px;
  margin-top: 54px;
  padding: 1px 0 0;
  border: 1px solid #8a7a8a;
  background: #742774;
  outline: 1px solid #fff;
  outline-offset: -4px;
  color: #fff;
  font: 700 18.9px/44px ${SANS};
`;

/* ---------- taskbar ---------- */

const TaskbarRow = styled.footer`
  ${row}
  height: 46px;
  background: #1c1c1c;
  color: #fff;
  & > span { padding-top: 2px; }
`;
const SystemSlot = styled.div`
  display: flex;
  justify-content: center;
  align-items: center;
  width: 54px;
  height: 46px;
`;
const AppSlots = styled.div`
  ${row}
  margin-left: 3px;
`;
const AppSlot = styled.div<{ $open?: boolean; $current?: boolean; $stack?: boolean }>`
  display: flex;
  flex-direction: column;
  justify-content: space-between;
  align-items: center;
  width: 57px;
  height: 46px;
  padding-top: 11px;
  ${(p) => p.$current && css`background: linear-gradient(#4b4b4b, #4b4b4b) center / 55px 100% no-repeat;`}
  &::after {
    content: "";
    width: ${(p) => (p.$current ? 55 : 43)}px;
    height: 3px;
    background: ${(p) => (p.$open ? (p.$stack ? "linear-gradient(90deg, #76b9ed 29px, #4c7596 29px, #5f93bd 30px)" : "#76b9ed") : "transparent")};
  }
`;

const Taskbar = () => (
  <TaskbarRow>
    <SystemSlot><Svg width="24" height="24" viewBox="0 0 24 24" fill="#fff"><path d="M0 3.4L10 2V11.4H0ZM11 1.8L24 0V11.4H11ZM0 12.5H10V22L0 20.6ZM11 12.5H24V24L11 22.2Z" /></Svg></SystemSlot>
    <SystemSlot><Magnifier s={24} c="#fff" sw={2} /></SystemSlot>
    <SystemSlot>
      <Icon w={24} h={24} c="#fff" sw={1.4}><path d="M1 0V4H17V0M1 24V20H17V24M1 7H17V17H1ZM22.5 0V24" /><path d="M20.5 7H24V10H20.5Z" fill="#fff" stroke="none" /></Icon>
    </SystemSlot>
    <AppSlots>
      <AppSlot>
        <Svg width="24" height="24" viewBox="0 0 24 24">
          <path d="M12 0A12 12 0 0 1 24 11C24 16 17 17 14.5 14.5L22 18.5A12 12 0 1 1 12 0Z" fill="#1b8fd6" />
          <path d="M1.5 6.5C6 -2 24 -2 24 11C24 16 17 17 14.5 14.5C17 9 11 5 1.5 6.5Z" fill="#43c7a0" />
          <path d="M0 13C1 6 12 4 15 10C10 9 8 14 11 18C14 22 20 21 22 18.5C18 26 3 26 0 13Z" fill="#0c59a4" />
          <rect x="0" y="15" width="13" height="9" rx="1" fill="#c4720c" /><rect x="0" y="19" width="13" height="1" fill="#7a4200" /><path d="M4 15V13.4H8.5V15" fill="none" stroke="#c4720c" />
        </Svg>
      </AppSlot>
      <AppSlot $open $stack>
        <Svg width="24" height="24" viewBox="0 0 24 24"><path d="M1 3H9L11 6H23V21H1Z" fill="#ffd766" /><path d="M1 3H9L11 6H1Z" fill="#d99a1c" /><path d="M5 21V13H19V21L15.5 22V17H8.5V22Z" fill="#3f98dc" /></Svg>
      </AppSlot>
      <AppSlot $open>
        <Svg width="24" height="24" viewBox="0 0 24 24"><path d="M7 1H22V18H7Z" fill="#1490df" /><path d="M14.5 1H22V9H14.5Z" fill="#50d9ff" /><path d="M7 13L15.5 17.5L24 12V23H7Z" fill="#28a8ea" /><path d="M7 23L24 12V23Z" fill="#1066b5" /><rect x="0" y="5" width="14" height="14" rx="1" fill="#0078d4" /><text x="7" y="16" textAnchor="middle" fontSize="11" fontWeight="700" fill="#fff" fontFamily="Open Sans">O</text></Svg>
      </AppSlot>
      <AppSlot $open>
        <Svg width="24" height="24" viewBox="0 0 24 24"><circle cx="14" cy="4.5" r="4" fill="#7b83eb" /><circle cx="20.5" cy="5.5" r="2.7" fill="#5059c9" /><path d="M16 9H24V15C24 19 20 20 17 19Z" fill="#5059c9" /><path d="M8 9H19V16C19 26 6 26 8 16Z" fill="#7b83eb" /><rect x="0" y="6" width="13" height="13" rx="1" fill="#4b53bc" /><text x="6.5" y="16.4" textAnchor="middle" fontSize="10.5" fontWeight="700" fill="#fff" fontFamily="Open Sans">T</text></Svg>
      </AppSlot>
      <AppSlot $open $stack>
        <Svg width="24" height="24" viewBox="0 0 24 24"><path d="M17 0L24 3V21L17 24L5 13L2 16L0 15V14L3 12L0 10V9L2 8L5 11ZM18 7L11 12L18 17Z" fill="#1f8ad2" fillRule="evenodd" /><path d="M17 0L24 3V21L17 24V18.5L18 17V7L17 5.5Z" fill="#3ba7f0" /></Svg>
      </AppSlot>
      <AppSlot $open $current>
        <Svg width="24" height="24" viewBox="0 0 24 24">
          <circle cx="12" cy="12" r="12" fill="#fbc116" /><path d="M12 12L1.6 6A12 12 0 0 0 12 24L17.2 15Z" fill="#2ba24c" />
          <path d="M1.6 6A12 12 0 0 1 22.4 6H12L7 9Z" fill="#ea3f31" /><path d="M1.6 6L7 15L9 7L12 6Z" fill="#ea3f31" />
          <circle cx="12" cy="12" r="5.7" fill="#fff" /><circle cx="12" cy="12" r="4.5" fill="#3b7de9" />
        </Svg>
      </AppSlot>
      <AppSlot $open>
        <Svg width="24" height="24" viewBox="0 0 24 24"><circle cx="12" cy="12" r="11.6" fill="#1ed760" /><path d="M5 8.6C9.5 7.2 15.5 7.6 19.3 9.9M5.6 12.3C9.6 11.1 14.6 11.6 18 13.7M6.2 15.8C9.6 14.8 13.6 15.2 16.5 17" fill="none" stroke="#1c1c1c" strokeWidth="2" strokeLinecap="round" /></Svg>
      </AppSlot>
      <AppSlot $open>
        <Svg width="24" height="24" viewBox="0 0 24 24" fill="#fff"><path d={gearPath(8, 10, 7.5, 12)} /><circle cx="12" cy="12" r="4.9" fill="#1c1c1c" /></Svg>
      </AppSlot>
      <AppSlot $open $stack>
        <Svg width="24" height="24" viewBox="0 0 24 24"><path d="M6 1H24V23H6Z" fill="#21a366" /><path d="M15 1H24V8H15Z" fill="#33c481" /><path d="M6 8H15V16H6Z" fill="#107c41" /><path d="M6 16H24V23H6Z" fill="#185c37" /><path d="M15 8H24V16H15Z" fill="#18894e" /><rect x="0" y="5" width="14" height="14" rx="1" fill="#107c41" /><text x="7" y="16" textAnchor="middle" fontSize="11" fontWeight="700" fill="#fff" fontFamily="Open Sans">X</text></Svg>
      </AppSlot>
      <AppSlot $open>
        <Svg width="24" height="24" viewBox="0 0 24 24"><rect x="13" y="0" width="8" height="24" rx="1" fill="#d99a12" /><rect x="8" y="6" width="8" height="18" rx="1" fill="#eeb92c" /><rect x="3" y="12" width="8" height="12" rx="1" fill="#f9d95c" /></Svg>
      </AppSlot>
    </AppSlots>
    <Svg $ml={473} width="37" height="32" viewBox="0 0 37 32">
      <circle cx="25" cy="10" r="9.5" fill="#f28c1b" /><circle cx="9" cy="21.5" r="8.8" fill="#9db9f0" /><circle cx="18" cy="17" r="9.5" fill="#b4cbf6" />
      <circle cx="28" cy="22.5" r="8" fill="#c4d6f8" /><rect x="6" y="21" width="24" height="9.5" rx="4.7" fill="#cfddf8" />
    </Svg>
    <Text $size={20.05} $ml={12} $w={250}>22°C  Mayorm. nublado</Text>
    <Icon w={18} h={10} c="#fff" sw={1.4}><path d="M.5 9.5L9 1L17.5 9.5" /></Icon>
    <Svg $ml={15} width="24" height="17" viewBox="0 0 24 17"><path d="M6 16.5A5.5 5.5 0 0 1 4.5 6A8 8 0 0 1 19 6.5A5 5 0 0 1 19.5 16.5Z" fill="#0f6cc4" /><path d="M6 16.5L5 12L12 8L24 12.5A5 5 0 0 1 19.5 16.5Z" fill="#29a2ea" /></Svg>
    <Icon w={23} h={13} ml={12} c="#fff" sw={1.4}><path d="M.7 .7H20.5V12.3H.7ZM22 4V9" /><path d="M3 3H15V10H3Z" fill="#fff" stroke="none" /></Icon>
    <Icon w={19} h={18} ml={16} c="#fff" sw={1.4}>
      <path d="M1 17.5C1 8.5 8 1 18 .8M5.3 17.5C5.3 11 10.5 5.4 18 5.2M9.6 17.5C9.6 13.5 13 9.8 18 9.6" /><circle cx="16" cy="15.8" r="1.6" fill="#fff" stroke="none" />
    </Icon>
    <Icon w={22} h={18} ml={14} c="#fff" sw={1.3}><path d="M1 6H4.5L9 1.5V16.5L4.5 12H1ZM12 6C13.5 7.5 13.5 10.5 12 12M15 3.5C18 6.5 18 11.5 15 14.5M18 1C22 5 22 13 18 17" /></Icon>
    <Text $size={17} $ml={19} $w={53}>ESP</Text>
    <Text $size={17.3} $w={117}>12:28 p. m.</Text>
    <Icon w={24} h={24} c="#fff" sw={1.4}><path d="M1 1H23V18.5H15L12 22.5L9 18.5H1Z" /></Icon>
    <Icon w={1} h={46} ml={29} c="#777" sw={1}><path d="M.5 0V46" /></Icon>
  </TaskbarRow>
);

export default function App() {
  return (
    <Screen>
      <Global />
      <Browser />
      <Suite />
      <Commands />
      <Formula />
      <Workspace>
        <RailIcons />
        <Data />
        <Canvas />
        <Properties />
      </Workspace>
      <Taskbar />
      <Dialog>
        <DialogTitle $size={29.29} $weight={300}>Se produjo un problema al confirmar en Git</DialogTitle>
        <DialogBody $size={18.31}>No tiene permisos para confirmar en este repositorio.</DialogBody>
        <DialogLink $size={18.9}>Más</DialogLink>
        <AcceptButton>Aceptar</AcceptButton>
      </Dialog>
    </Screen>
  );
}
